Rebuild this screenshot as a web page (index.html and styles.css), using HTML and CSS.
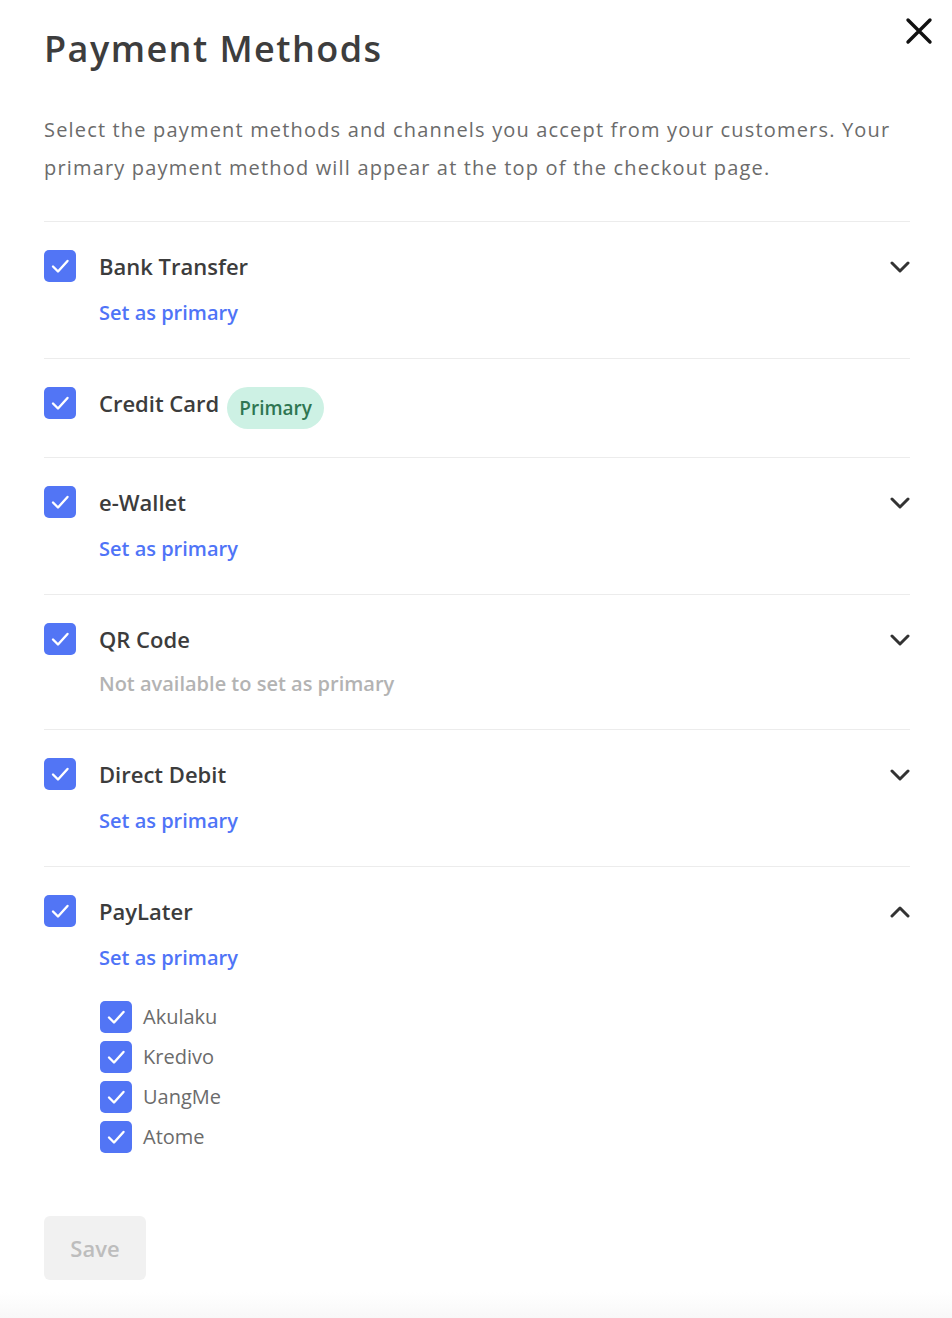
FILE: index.html
```html
<!DOCTYPE html>
<html lang="en">
<head>
<meta charset="utf-8">
<title>Payment Methods</title>
<link rel="stylesheet" href="styles.css">
</head>
<body>
<div class="modal">
  <button class="close" aria-label="Close">
    <svg width="28" height="28" viewBox="0 0 28 28"><path d="M3 3L25 25M25 3L3 25" stroke="#111" stroke-width="3.4" stroke-linecap="round" fill="none"/></svg>
  </button>
  <h1 class="title">Payment Methods</h1>
  <p class="desc">Select the payment methods and channels you accept from your customers. Your primary payment method will appear at the top of the checkout page.</p>

  <div class="list">
    <div class="row">
      <div class="head">
        <span class="cb"><svg viewBox="0 0 32 32"><path d="M9 16.5l5 5 9.5-10.5" /></svg></span>
        <span class="name">Bank Transfer</span>
        <span class="chev"><svg viewBox="0 0 20 12"><path d="M2 2l8 8 8-8"/></svg></span>
      </div>
      <a class="primary-link">Set as primary</a>
    </div>
    <div class="row">
      <div class="head">
        <span class="cb"><svg viewBox="0 0 32 32"><path d="M9 16.5l5 5 9.5-10.5" /></svg></span>
        <span class="name">Credit Card</span>
        <span class="badge">Primary</span>
      </div>
    </div>
    <div class="row">
      <div class="head">
        <span class="cb"><svg viewBox="0 0 32 32"><path d="M9 16.5l5 5 9.5-10.5" /></svg></span>
        <span class="name">e-Wallet</span>
        <span class="chev"><svg viewBox="0 0 20 12"><path d="M2 2l8 8 8-8"/></svg></span>
      </div>
      <a class="primary-link">Set as primary</a>
    </div>
    <div class="row">
      <div class="head">
        <span class="cb"><svg viewBox="0 0 32 32"><path d="M9 16.5l5 5 9.5-10.5" /></svg></span>
        <span class="name">QR Code</span>
        <span class="chev"><svg viewBox="0 0 20 12"><path d="M2 2l8 8 8-8"/></svg></span>
      </div>
      <span class="unavailable">Not available to set as primary</span>
    </div>
    <div class="row">
      <div class="head">
        <span class="cb"><svg viewBox="0 0 32 32"><path d="M9 16.5l5 5 9.5-10.5" /></svg></span>
        <span class="name">Direct Debit</span>
        <span class="chev"><svg viewBox="0 0 20 12"><path d="M2 2l8 8 8-8"/></svg></span>
      </div>
      <a class="primary-link">Set as primary</a>
    </div>
    <div class="row last">
      <div class="head">
        <span class="cb"><svg viewBox="0 0 32 32"><path d="M9 16.5l5 5 9.5-10.5" /></svg></span>
        <span class="name">PayLater</span>
        <span class="chev"><svg viewBox="0 0 20 12"><path d="M2 10l8-8 8 8"/></svg></span>
      </div>
      <a class="primary-link">Set as primary</a>
      <ul class="subs">
        <li><span class="cb"><svg viewBox="0 0 32 32"><path d="M9 16.5l5 5 9.5-10.5" /></svg></span>Akulaku</li>
        <li><span class="cb"><svg viewBox="0 0 32 32"><path d="M9 16.5l5 5 9.5-10.5" /></svg></span>Kredivo</li>
        <li><span class="cb"><svg viewBox="0 0 32 32"><path d="M9 16.5l5 5 9.5-10.5" /></svg></span>UangMe</li>
        <li><span class="cb"><svg viewBox="0 0 32 32"><path d="M9 16.5l5 5 9.5-10.5" /></svg></span>Atome</li>
      </ul>
    </div>
  </div>

  <button class="save">Save</button>
</div>
<div class="fade"></div>
</body>
</html>
```

FILE: styles.css
```css
* { box-sizing: border-box; }
html, body { margin: 0; padding: 0; background: #fff; }
body {
  font-family: "Open Sans", "Liberation Sans", sans-serif;
  color: #3c3c3c;
  width: 952px;
  height: 1318px;
  overflow: hidden;
  position: relative;
}
.modal {
  position: relative;
  padding: 25px 42px 0 44px;
}
.close {
  position: absolute;
  top: 17px;
  right: 19px;
  width: 28px;
  height: 28px;
  padding: 0;
  border: 0;
  background: none;
}
.close svg { display: block; }
.title {
  margin: 0;
  font-size: 36px;
  line-height: 48px;
  font-weight: 600;
  color: #3d3d3d;
  letter-spacing: 1.45px;
}
.desc {
  margin: 38px 0 0;
  font-size: 20px;
  line-height: 38px;
  color: #6b6b6b;
  width: 866px;
  letter-spacing: 1.17px;
}
.list {
  margin-top: 34px;
  border-top: 1px solid #ececec;
}
.row {
  padding: 28px 0 28px;
  border-bottom: 1px solid #ececec;
  display: flex;
  flex-direction: column;
  align-items: flex-start;
}
.row.last { border-bottom: 0; padding-bottom: 0; }
.head {
  display: flex;
  align-items: flex-start;
  width: 100%;
}
.cb {
  width: 32px;
  height: 32px;
  border-radius: 5px;
  background: #5275f5;
  flex: none;
  display: block;
}
.cb svg {
  display: block;
  width: 32px;
  height: 32px;
}
.cb path {
  fill: none;
  stroke: #fff;
  stroke-width: 2.4;
  stroke-linecap: round;
  stroke-linejoin: round;
}
.name {
  margin-left: 23px;
  font-size: 22px;
  line-height: 33px;
  font-weight: 600;
  color: #3c3c3c;
}
.badge {
  margin-left: 8px;
  height: 42px;
  padding: 0 12px;
  border-radius: 21px;
  background: #cdf1e4;
  color: #2f7652;
  font-size: 19px;
  font-weight: 600;
  line-height: 42px;
}
.chev {
  margin-left: auto;
  margin-top: 11px;
  width: 20px;
  height: 12px;
}
.chev svg { display: block; width: 20px; height: 12px; }
.chev path {
  fill: none;
  stroke: #333;
  stroke-width: 3;
  stroke-linecap: round;
  stroke-linejoin: round;
}
.primary-link, .unavailable {
  margin: 14px 0 2px 55px;
  font-size: 20px;
  line-height: 31px;
  font-weight: 600;
  color: #4f74f7;
}
.unavailable {
  margin-top: 13px;
  line-height: 30px;
  color: #b3b3b3;
}
.subs {
  list-style: none;
  margin: 26px 0 0 56px;
  padding: 0;
  display: flex;
  flex-direction: column;
  gap: 8px;
}
.subs li {
  display: flex;
  align-items: center;
  gap: 11px;
  font-size: 20px;
  line-height: 32px;
  color: #6b6b6b;
}
.save {
  margin-top: 63px;
  width: 102px;
  height: 64px;
  border: 0;
  border-radius: 6px;
  background: #f1f1f1;
  color: #bdbdbd;
  font-family: "Open Sans", "Liberation Sans", sans-serif;
  font-size: 22px;
  font-weight: 600;
  padding: 0;
}
.fade {
  position: absolute;
  left: 0;
  right: 0;
  bottom: 0;
  height: 26px;
  background: linear-gradient(to bottom, rgba(248,248,248,0), #f8f8f8);
}
```
